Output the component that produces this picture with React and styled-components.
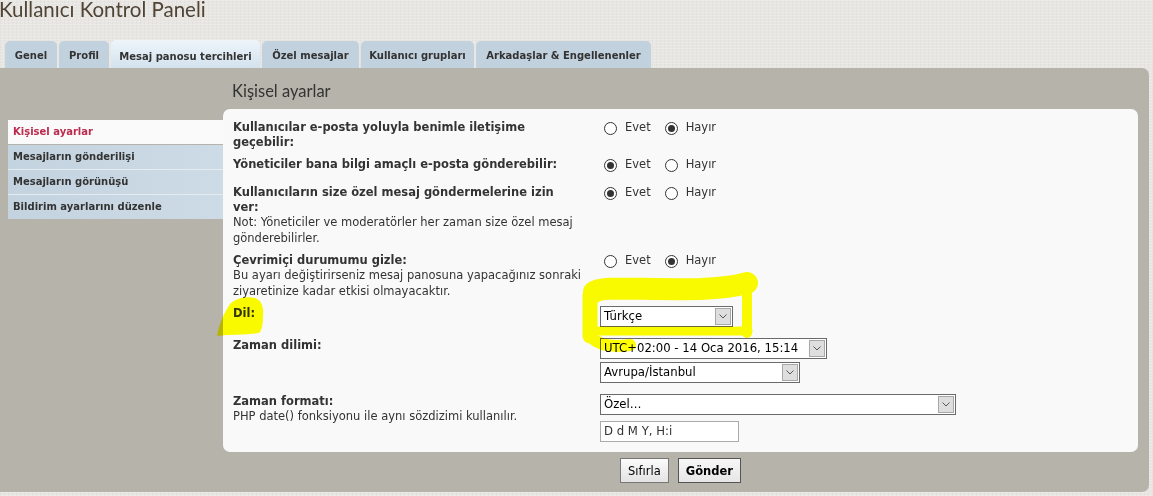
import React from "react";
import styled, { createGlobalStyle, css } from "styled-components";

const GlobalStyle = createGlobalStyle`
  html, body { margin: 0; padding: 0; }
  body {
    background: #e8e6e2;
    font-family: "DejaVu Sans", Verdana, sans-serif;
    color: #333;
  }
`;

const Root = styled.div`
  position: relative;
  width: 1153px;
  height: 496px;
  overflow: hidden;
  background:
    repeating-linear-gradient(0deg, rgba(255,255,255,0.18) 0 1px, transparent 1px 3px),
    repeating-linear-gradient(90deg, rgba(0,0,0,0.025) 0 1px, transparent 1px 4px),
    #e8e6e2;
`;

const Wrapper = styled.div`
  margin-left: -8px;
  width: 1157px;
`;

const Title = styled.h1`
  margin: 0;
  height: 40px;
  padding: 0 0 0 7px;
  box-sizing: border-box;
  font-family: Lato, "Open Sans", sans-serif;
  font-weight: normal;
  font-size: 20.5px;
  line-height: 18px;
  color: #4f4436;
`;

const Tabs = styled.ul`
  display: flex;
  align-items: flex-end;
  gap: 2px;
  height: 28px;
  margin: 0;
  padding: 0 0 0 13px;
  list-style: none;
`;

const Tab = styled.li`
  width: ${(p) => p.$w}px;
  height: 27px;
  box-sizing: border-box;
  display: flex;
  align-items: center;
  justify-content: center;
  padding-top: 2px;
  border-radius: 5px 5px 0 0;
  background: #c1d1de;
  font-weight: bold;
  font-size: 10px;
  color: #333;
  white-space: nowrap;
  ${(p) =>
    p.$active &&
    css`
      height: 28px;
      padding-top: 4px;
      background: linear-gradient(#eef5fa, #d3e2ee);
    `}
`;

const Panel = styled.div`
  display: grid;
  grid-template-columns: 215px 915px;
  grid-template-rows: 41px auto auto;
  padding: 0 11px 0 16px;
  background: #b6b4aa;
  border-radius: 7px;
`;

const Heading = styled.h2`
  grid-column: 2;
  margin: 0;
  padding: 13px 0 0 9px;
  font-family: Lato, "Open Sans", sans-serif;
  font-weight: normal;
  font-size: 16.5px;
  line-height: 20px;
  color: #333;
`;

const Menu = styled.ul`
  grid-column: 1;
  grid-row: 2;
  align-self: start;
  margin: 11px 0 0;
  padding: 0;
  list-style: none;
`;

const MenuItem = styled.li`
  height: 25px;
  box-sizing: border-box;
  padding: 0 0 1px 5px;
  display: flex;
  align-items: center;
  border-bottom: 1px solid #e4ebf1;
  background: linear-gradient(to right, #c3d3df, #cddbe6);
  font-weight: bold;
  font-size: 10px;
  color: #333;
  &:last-child { border-bottom: none; height: 24px; }
  ${(p) =>
    p.$active &&
    css`
      background: #fafafa;
      color: #bc2a4d;
      border-bottom-color: #b6b4aa;
    `}
`;

const Content = styled.div`
  grid-column: 2;
  grid-row: 2;
  background: #f9f9f9;
  border-radius: 7px;
  padding: 10.5px 10px 0;
`;

const Row = styled.div`
  display: grid;
  grid-template-columns: 352px 1fr;
  column-gap: 15px;
  padding-bottom: 7.5px;
  font-size: 11.5px;
  line-height: 15.2px;
`;

const Label = styled.div`
  font-weight: bold;
  color: #333;
  white-space: nowrap;
`;

const Note = styled.div`
  font-weight: normal;
  color: #333;
  white-space: nowrap;
`;

const Control = styled.div`
  display: flex;
  flex-direction: column;
  align-items: flex-start;
`;

const RadioGroup = styled.div`
  display: flex;
  align-items: flex-start;
  height: 20px;
  padding-left: 4px;
`;

const RadioLabel = styled.label`
  display: flex;
  align-items: flex-start;
  margin-right: 14px;
  color: #333;
`;

const RadioCircle = styled.span`
  width: 13px;
  height: 13px;
  box-sizing: border-box;
  margin: 2px 8px 0 0;
  border: 1px solid #333;
  border-radius: 50%;
  background: #fff;
  display: flex;
  align-items: center;
  justify-content: center;
  &::after {
    content: "";
    width: 7px;
    height: 7px;
    border-radius: 50%;
    background: ${(p) => (p.$checked ? "#333" : "transparent")};
  }
`;

const SelectBox = styled.div`
  display: flex;
  align-items: center;
  justify-content: space-between;
  width: ${(p) => p.$w}px;
  height: 21px;
  box-sizing: border-box;
  margin-bottom: 3.2px;
  padding-left: 3px;
  border: 1px solid #6a6a6a;
  background: #fff;
  font-size: 11.7px;
  color: #000;
  white-space: nowrap;
`;

const SelectArrow = styled.span`
  width: 16px;
  height: 17px;
  box-sizing: border-box;
  margin-right: 1px;
  border: 1px solid #a8a8a8;
  background: #dedede;
  display: flex;
  align-items: center;
  justify-content: center;
`;

const TextInput = styled.div`
  width: 139px;
  height: 21px;
  box-sizing: border-box;
  margin: 2.5px 0 3px;
  padding-left: 3px;
  border: 1px solid #ababab;
  background: #fff;
  font-size: 11.7px;
  line-height: 19px;
  color: #333;
`;

const Buttons = styled.div`
  grid-column: 2;
  grid-row: 3;
  display: flex;
  justify-content: center;
  gap: 9px;
  padding: 6px 0 9px;
`;

const Button = styled.button`
  height: 25px;
  padding: 0 7px;
  border: 1px solid #777;
  background: linear-gradient(#fbfbfb, #e3e3e3);
  font-family: "DejaVu Sans", Verdana, sans-serif;
  font-size: 11.5px;
  font-weight: ${(p) => (p.$primary ? "bold" : "normal")};
  color: #000;
  ${(p) => p.$primary && css`border-color: #555; background: linear-gradient(#f7f7f7, #e6e6e6);`}
`;

const Highlight = styled.svg`
  position: absolute;
  left: 0;
  top: 0;
  pointer-events: none;
  mix-blend-mode: multiply;
`;

const Chevron = () => (
  <svg width="8" height="5" viewBox="0 0 8 5">
    <path d="M0.5 0.5 L4 4 L7.5 0.5" fill="none" stroke="#555" strokeWidth="1" />
  </svg>
);

const Select = ({ w, children }) => (
  <SelectBox $w={w}>
    <span>{children}</span>
    <SelectArrow>
      <Chevron />
    </SelectArrow>
  </SelectBox>
);

const Radios = ({ yes }) => (
  <RadioGroup>
    <RadioLabel>
      <RadioCircle $checked={yes} />
      Evet
    </RadioLabel>
    <RadioLabel>
      <RadioCircle $checked={!yes} />
      Hayır
    </RadioLabel>
  </RadioGroup>
);

const tabs = [
  { t: "Genel", w: 52 },
  { t: "Profil", w: 50 },
  { t: "Mesaj panosu tercihleri", w: 149 },
  { t: "Özel mesajlar", w: 97 },
  { t: "Kullanıcı grupları", w: 113 },
  { t: "Arkadaşlar & Engellenenler", w: 175 },
];

const menu = [
  "Kişisel ayarlar",
  "Mesajların gönderilişi",
  "Mesajların görünüşü",
  "Bildirim ayarlarını düzenle",
];

export default function App() {
  return (
    <Root>
      <GlobalStyle />
      <Wrapper>
        <Title>Kullanıcı Kontrol Paneli</Title>
        <Tabs>
          {tabs.map((t, i) => (
            <Tab key={t.t} $w={t.w} $active={i === 2}>
              {t.t}
            </Tab>
          ))}
        </Tabs>
        <Panel>
          <Heading>Kişisel ayarlar</Heading>
          <Menu>
            {menu.map((m, i) => (
              <MenuItem key={m} $active={i === 0}>
                {m}
              </MenuItem>
            ))}
          </Menu>
          <Content>
            <Row>
              <Label>
                Kullanıcılar e-posta yoluyla benimle iletişime
                <br />
                geçebilir:
              </Label>
              <Control>
                <Radios yes={false} />
              </Control>
            </Row>
            <Row>
              <Label>Yöneticiler bana bilgi amaçlı e-posta gönderebilir:</Label>
              <Control>
                <Radios yes={true} />
              </Control>
            </Row>
            <Row>
              <div>
                <Label>
                  Kullanıcıların size özel mesaj göndermelerine izin
                  <br />
                  ver:
                </Label>
                <Note>
                  Not: Yöneticiler ve moderatörler her zaman size özel mesaj
                  <br />
                  gönderebilirler.
                </Note>
              </div>
              <Control>
                <Radios yes={true} />
              </Control>
            </Row>
            <Row>
              <div>
                <Label>Çevrimiçi durumumu gizle:</Label>
                <Note>
                  Bu ayarı değiştirirseniz mesaj panosuna yapacağınız sonraki
                  <br />
                  ziyaretinize kadar etkisi olmayacaktır.
                </Note>
              </div>
              <Control>
                <Radios yes={false} />
              </Control>
            </Row>
            <Row>
              <Label>Dil:</Label>
              <Control>
                <Select w={133}>Türkçe</Select>
              </Control>
            </Row>
            <Row>
              <Label>Zaman dilimi:</Label>
              <Control>
                <Select w={227}>UTC+02:00 - 14 Oca 2016, 15:14</Select>
                <Select w={200}>Avrupa/İstanbul</Select>
              </Control>
            </Row>
            <Row>
              <div>
                <Label>Zaman formatı:</Label>
                <Note>PHP date() fonksiyonu ile aynı sözdizimi kullanılır.</Note>
              </div>
              <Control>
                <Select w={356}>Özel…</Select>
                <TextInput>D d M Y, H:i</TextInput>
              </Control>
            </Row>
          </Content>
          <Buttons>
            <Button>Sıfırla</Button>
            <Button $primary>Gönder</Button>
          </Buttons>
        </Panel>
      </Wrapper>
      <Highlight width="1153" height="496" viewBox="0 0 1153 496">
        <g fill="#ffff00">
          <path d="M217 336 C219 326 222 316 230 304 C236 298 246 296 255 298 C261 300 264 306 263 316 C263 324 262 330 259 333 C246 335 231 334 217 336 Z" />
        </g>
        <g fill="none" stroke="#ffff00" strokeLinecap="round" strokeLinejoin="round">
          <path d="M594 292 C600 286 640 290 700 289 C725 288 740 285 747 283" strokeWidth="22" />
          <path d="M590 295 L590 336" strokeWidth="15" />
          <path d="M747 284 L747 333" strokeWidth="10" />
          <path d="M590 331 L748 331" strokeWidth="9" />
          <path d="M592 338 C600 346 615 347 630 345" strokeWidth="12" />
        </g>
      </Highlight>
    </Root>
  );
}
